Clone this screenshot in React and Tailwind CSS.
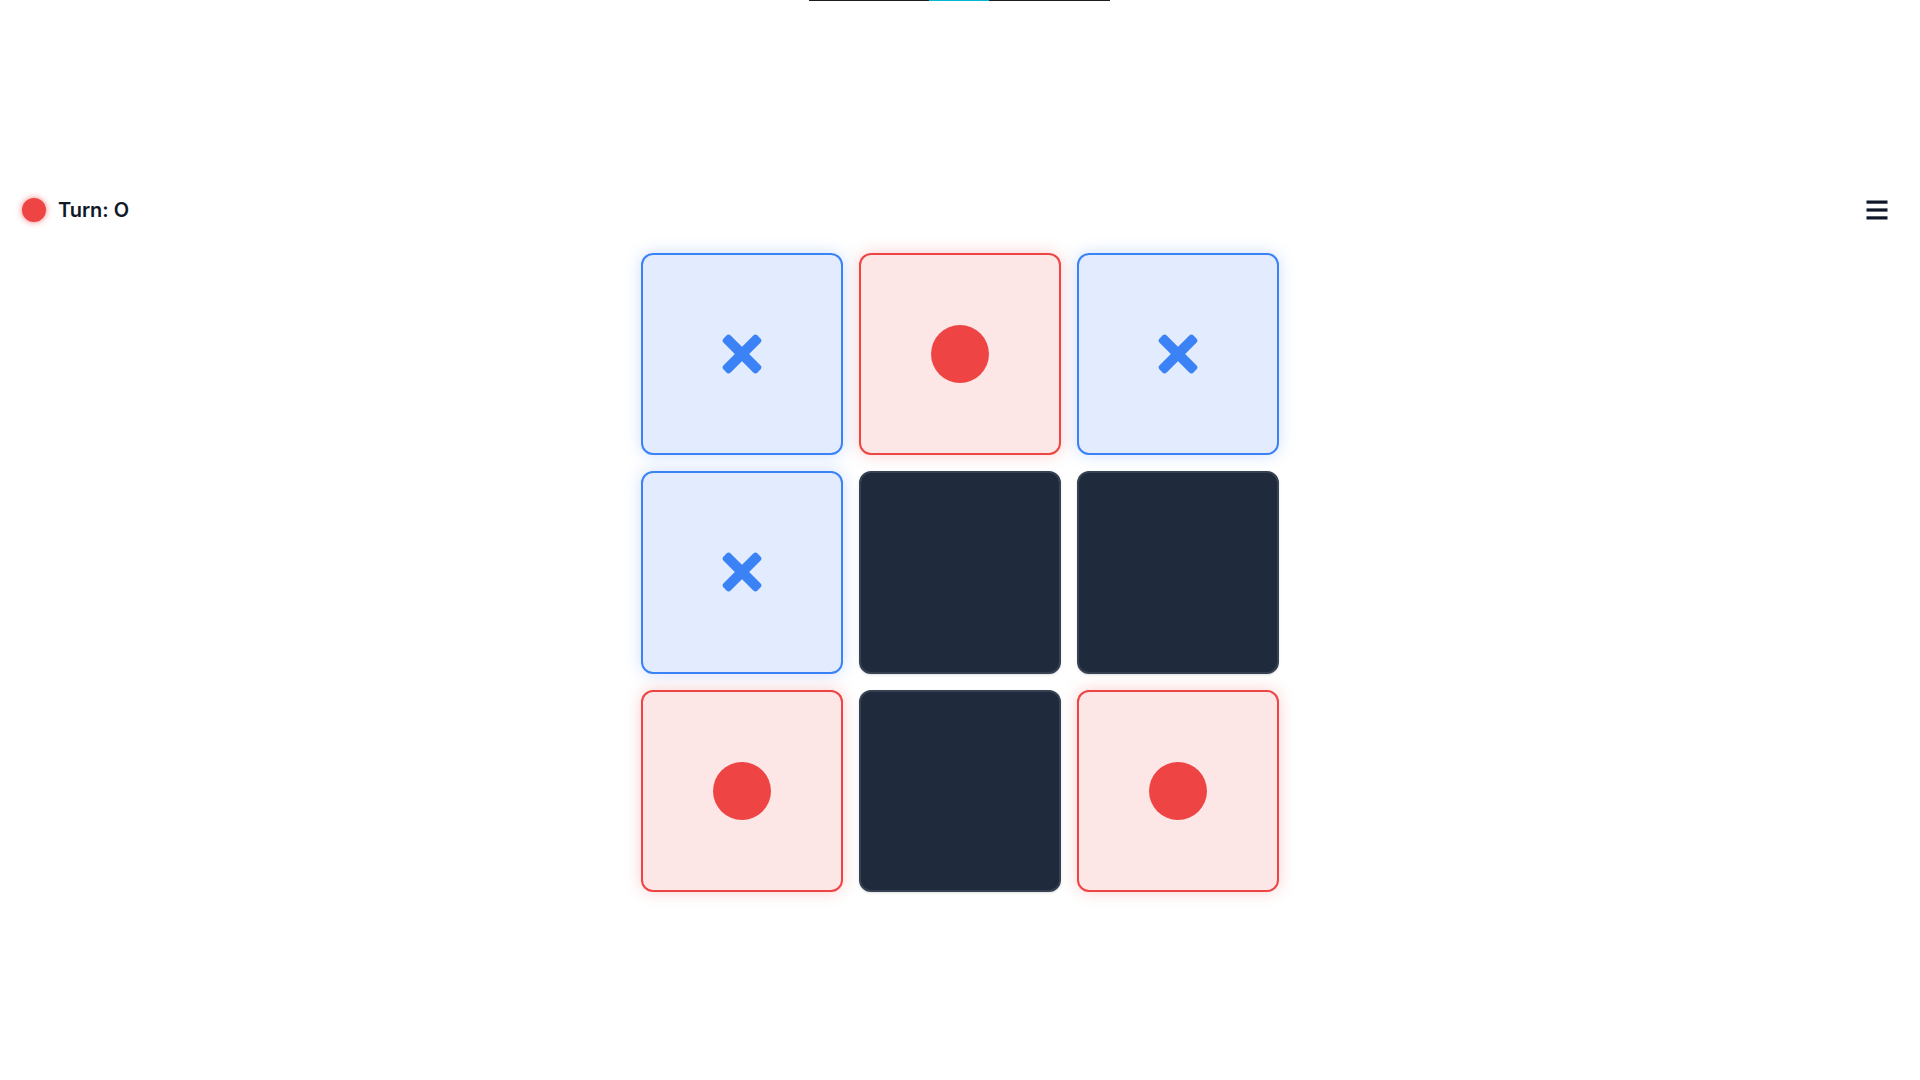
import { useState } from 'react';

const FONT = { fontFamily: 'Inter, "Noto Sans", "Liberation Sans", sans-serif' };

const XMark = () => (
  <svg width="42" height="42" viewBox="0 0 42 42" aria-hidden="true">
    <g transform="rotate(45 21 21)" fill="#3b82f6">
      <rect x="-3" y="16" width="48" height="10" rx="3" />
      <rect x="16" y="-3" width="10" height="48" rx="3" />
    </g>
  </svg>
);

const OMark = () => <div className="w-[58px] h-[58px] rounded-full bg-[#ef4444]" />;

const Cell = ({ value }) => {
  if (value === 'X') {
    return (
      <button className="aspect-square rounded-xl border-2 border-[#3b82f6] bg-[#e2ecfe] shadow-[0_0_16px_rgba(59,130,246,0.25)] flex items-center justify-center">
        <XMark />
      </button>
    );
  }
  if (value === 'O') {
    return (
      <button className="aspect-square rounded-xl border-2 border-[#ef4444] bg-[#fce6e6] shadow-[0_0_16px_rgba(239,68,68,0.25)] flex items-center justify-center">
        <OMark />
      </button>
    );
  }
  return <button className="aspect-square rounded-xl border-2 border-[#364152] bg-[#1f2a3c] shadow-sm" />;
};

export default function App() {
  const [board] = useState(['X', 'O', 'X', 'X', null, null, 'O', null, 'O']);

  return (
    <div className="min-h-screen bg-white" style={FONT}>
      {/* leftover bar at the very top */}
      <div className="flex justify-center">
        <div className="flex h-px w-[301px] -translate-x-px">
          <div className="w-[120px] bg-[#1c1c1c]" />
          <div className="w-[60px] bg-[#06b6d4]" />
          <div className="flex-1 bg-[#1c1c1c]" />
        </div>
      </div>

      <div className="mt-[189px] h-10 flex items-center justify-between pl-[22px] pr-[32px]">
        <div className="flex items-center gap-3">
          <div className="w-6 h-6 rounded-full bg-[#ef4444] shadow-[0_0_6px_rgba(239,68,68,0.7)]" />
          <span className="text-xl font-semibold text-[#111827]">Turn: O</span>
        </div>
        <button aria-label="Menu" className="flex items-center justify-center">
          <svg width="22" height="20" viewBox="0 0 22 20" aria-hidden="true" fill="#0f172a">
            <rect x="0.5" y="0.5" width="21" height="3.2" />
            <rect x="0.5" y="8.4" width="21" height="3.2" />
            <rect x="0.5" y="16.3" width="21" height="3.2" />
          </svg>
        </button>
      </div>

      <div className="mt-[23px] flex justify-center">
        <div className="grid grid-cols-3 gap-4 w-[639px]">
          {board.map((v, i) => (
            <Cell key={i} value={v} />
          ))}
        </div>
      </div>
    </div>
  );
}
